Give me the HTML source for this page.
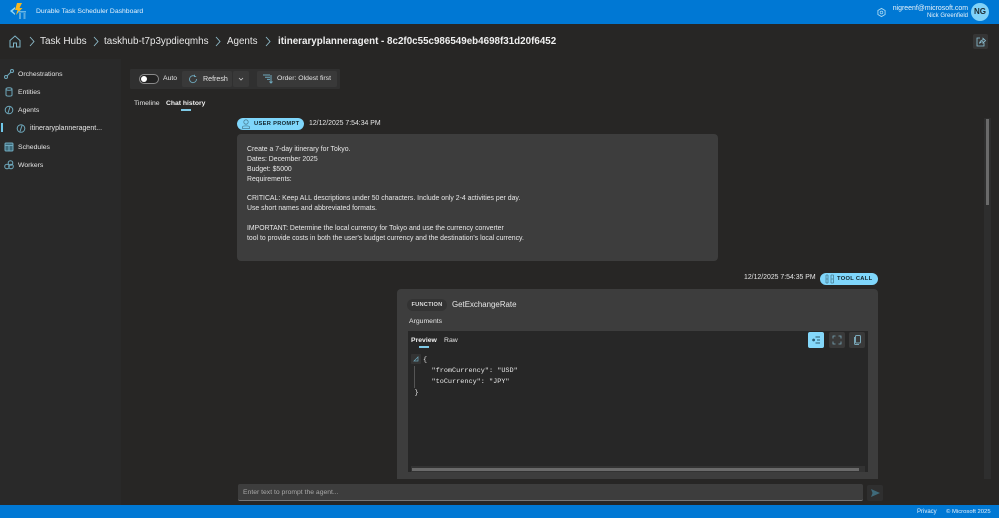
<!DOCTYPE html>
<html><head><meta charset="utf-8">
<style>
*{box-sizing:border-box}
html,body{margin:0;padding:0;width:999px;height:518px;overflow:hidden;background:#272625;font-family:"Liberation Sans",sans-serif;color:#e6e6e6}
.a{position:absolute;white-space:nowrap}
.t{font-size:6.85px;line-height:10px}
svg{position:absolute;overflow:visible;fill:none}
.ic{stroke:#6fa9bd;stroke-width:1}
.pill{position:absolute;white-space:nowrap;background:#7fd6fb;border-radius:7px;height:12px;color:#12242c;font-weight:bold;font-size:5.75px;line-height:12px;letter-spacing:.3px}
.btn{position:absolute;background:#393939;border-radius:2px}
.msg{font-size:6.88px;line-height:9.85px;color:#e8e8e8}
.mono{font-family:'Liberation Mono',monospace;font-size:6.85px;line-height:11px;color:#e8e8e8}
</style></head><body>
<div class="a" style="left:0;top:0;width:999px;height:24px;background:#0078d4"></div>
<svg style="left:9px;top:2px" width="20" height="18" viewBox="0 0 20 18">
<path d="M1 9L6 5V7L3.5 9L6 11.5V13Z" fill="#8fd6f5"/>
<path d="M8 1H13L10.5 6H13.5L7 13L8.5 8H6Z" fill="#f6b81f"/>
<rect x="9" y="9" width="8" height="1.5" fill="#69b7e6"/>
<rect x="10" y="11" width="2" height="6" fill="#5aa9dc"/><rect x="14.5" y="11" width="2" height="6" fill="#5aa9dc"/>
</svg>
<div class="a" style="left:36px;top:6px;font-size:6.8px;line-height:11px;color:#e5f1fb">Durable Task Scheduler Dashboard</div>
<svg style="left:877px;top:7.5px" width="9" height="9" viewBox="0 0 10 10"><path d="M5 .5L9 2.8V7.2L5 9.5L1 7.2V2.8Z" stroke="#a8d8f2" stroke-width="1"/><circle cx="5" cy="5" r="1.5" stroke="#a8d8f2" stroke-width=".8"/></svg>
<div class="a" style="right:31px;top:3.5px;font-size:6.95px;line-height:10px;color:#eaf4fb">nigreenf@microsoft.com</div>
<div class="a" style="right:31px;top:12px;font-size:6px;line-height:8px;color:#eaf4fb">Nick Greenfield</div>
<div class="a" style="left:971px;top:3px;width:18px;height:18px;border-radius:50%;background:#80d2f8;color:#1b2a31;font-weight:bold;font-size:8px;line-height:18px;text-align:center">NG</div>

<svg style="left:9px;top:35px" width="12" height="13" viewBox="0 0 12 13"><path d="M1 5.5L6 1L11 5.5V12H7.5V8H4.5V12H1Z" stroke="#7fb5c8" stroke-width="1"/></svg>
<svg style="left:29px;top:36px" width="6" height="11" viewBox="0 0 6 11"><path d="M1 1L5 5.5L1 10" stroke="#8fbccb" stroke-width=".9"/></svg>
<div class="a" style="left:40px;top:35px;font-size:10px;line-height:13px;color:#e8e8e8">Task Hubs</div>
<svg style="left:93px;top:36px" width="6" height="11" viewBox="0 0 6 11"><path d="M1 1L5 5.5L1 10" stroke="#8fbccb" stroke-width=".9"/></svg>
<div class="a" style="left:104px;top:35px;font-size:9.85px;line-height:13px;color:#e8e8e8">taskhub-t7p3ypdieqmhs</div>
<svg style="left:215px;top:36px" width="6" height="11" viewBox="0 0 6 11"><path d="M1 1L5 5.5L1 10" stroke="#8fbccb" stroke-width=".9"/></svg>
<div class="a" style="left:227px;top:35px;font-size:9.8px;line-height:13px;color:#e8e8e8">Agents</div>
<svg style="left:265px;top:36px" width="6" height="11" viewBox="0 0 6 11"><path d="M1 1L5 5.5L1 10" stroke="#8fbccb" stroke-width=".9"/></svg>
<div class="a" style="left:278px;top:35px;font-size:9.82px;line-height:13px;font-weight:bold;color:#f0f0f0">itineraryplanneragent - 8c2f0c55c986549eb4698f31d20f6452</div>
<div class="a" style="left:973px;top:34px;width:15px;height:15px;background:#353535;border-radius:2px"></div>
<svg style="left:976px;top:37px" width="10" height="10" viewBox="0 0 10 10"><path d="M4 1H1V9H8V6M3.5 6.5C4 4 5.5 3 7 3V1.3L9.5 3.6L7 6V4.6C5.5 4.6 4.5 5.2 3.5 6.5Z" stroke="#8fc4d8" stroke-width=".8"/></svg>

<div class="a" style="left:0;top:59px;width:121px;height:446px;background:#292929"></div>
<svg style="left:4px;top:69px" width="10" height="10" viewBox="0 0 10 10"><circle cx="2" cy="8" r="1.5" class="ic"/><circle cx="8" cy="2" r="1.5" class="ic"/><path d="M3 7L7 3" class="ic"/></svg>
<div class="a t" style="left:18px;top:70px">Orchestrations</div>
<svg style="left:4px;top:87px" width="10" height="10" viewBox="0 0 10 10"><ellipse cx="5" cy="2" rx="3" ry="1.3" class="ic"/><path d="M2 2V8C2 9.5 8 9.5 8 8V2" class="ic"/></svg>
<div class="a t" style="left:18px;top:88px">Entities</div>
<svg style="left:4px;top:105px" width="10" height="10" viewBox="0 0 10 10"><circle cx="5" cy="5" r="3.8" class="ic"/><path d="M6 2L4 8" class="ic"/></svg>
<div class="a t" style="left:18px;top:106px">Agents</div>
<div class="a" style="left:1px;top:123px;width:2px;height:9px;background:#70c8ea"></div>
<svg style="left:16px;top:124px" width="10" height="10" viewBox="0 0 10 10"><circle cx="5" cy="4.5" r="3.8" class="ic"/><path d="M6 1.5L4 7.5" class="ic"/></svg>
<div class="a" style="left:30px;top:124px;font-size:7.05px;line-height:10px;color:#e6e6e6">itineraryplanneragent...</div>
<svg style="left:4px;top:142px" width="10" height="10" viewBox="0 0 10 10"><rect x="1" y="1" width="8" height="8" rx="1" fill="#3e6a7a" class="ic"/><path d="M1 3.5H9M5 3.5V9" class="ic"/></svg>
<div class="a t" style="left:18px;top:143px">Schedules</div>
<svg style="left:4px;top:160px" width="10" height="10" viewBox="0 0 10 10"><circle cx="3" cy="6.5" r="2.3" class="ic"/><circle cx="6.5" cy="3" r="2.3" class="ic"/><circle cx="7" cy="6.5" r="2.3" class="ic"/></svg>
<div class="a t" style="left:18px;top:161px">Workers</div>

<div class="a" style="left:130px;top:69px;width:210px;height:20px;background:#303030;border-radius:1px"></div>
<div class="a" style="left:139px;top:74px;width:20px;height:10px;border:1px solid #8a8a8a;border-radius:5px;background:#222"></div>
<div class="a" style="left:141px;top:76px;width:6px;height:6px;border-radius:50%;background:#fff"></div>
<div class="a t" style="left:163px;top:74px">Auto</div>
<div class="btn" style="left:182px;top:71px;width:50px;height:16px"></div>
<div class="btn" style="left:233px;top:71px;width:16px;height:16px"></div>
<svg style="left:188px;top:74px" width="10" height="10" viewBox="0 0 10 10"><path d="M8.5 5A3.5 3.5 0 1 1 6.5 2M6.5 .8V2.6H8.2" stroke="#6fa9bd" stroke-width=".9"/></svg>
<div class="a t" style="left:203px;top:74px;font-size:7.1px">Refresh</div>
<svg style="left:238px;top:77px" width="6" height="4" viewBox="0 0 6 4"><path d="M1 1L3 3L5 1" stroke="#ccc" stroke-width=".8"/></svg>
<div class="btn" style="left:257px;top:71px;width:80px;height:16px"></div>
<svg style="left:263px;top:74px" width="10" height="10" viewBox="0 0 10 10"><path d="M0 1H7M2 3.2H7M4 5.4H7" stroke="#6fa9bd" stroke-width="1"/><path d="M8 1V9M6.5 7.5L8 9L9.5 7.5" stroke="#6fa9bd" stroke-width="1"/></svg>
<div class="a t" style="left:277px;top:74px">Order: Oldest first</div>

<div class="a t" style="left:134px;top:99px">Timeline</div>
<div class="a t" style="left:166px;top:99px;font-weight:bold;color:#f0f0f0;font-size:6.75px">Chat history</div>
<div class="a" style="left:181px;top:109px;width:10px;height:2px;background:#7fc9e6"></div>

<div class="pill" style="left:237px;top:118px;width:67px;padding-left:17px">USER PROMPT</div>
<svg style="left:241px;top:119px" width="10" height="10" viewBox="0 0 10 10"><circle cx="5" cy="3" r="2.2" stroke="#4b7f94" stroke-width=".8"/><path d="M1.5 9.5V8C1.5 6.5 8.5 6.5 8.5 8V9.5Z" stroke="#4b7f94" stroke-width=".8"/></svg>
<div class="a t" style="left:309px;top:119px;font-size:6.9px">12/12/2025 7:54:34 PM</div>
<div class="a" style="left:237px;top:134px;width:481px;height:127px;background:#3d3d3d;border-radius:4px"></div>
<div class="a msg" style="left:247px;top:145px">Create a 7-day itinerary for Tokyo.<br>Dates: December 2025<br>Budget: $5000<br>Requirements:<br><br>CRITICAL: Keep ALL descriptions under 50 characters. Include only 2-4 activities per day.<br>Use short names and abbreviated formats.<br><br>IMPORTANT: Determine the local currency for Tokyo and use the currency converter<br>tool to provide costs in both the user's budget currency and the destination's local currency.</div>

<div class="a t" style="left:744px;top:273px;font-size:6.9px">12/12/2025 7:54:35 PM</div>
<div class="pill" style="left:820px;top:272.5px;width:58px;padding-left:17px">TOOL CALL</div>
<svg style="left:825px;top:273.5px" width="10" height="10" viewBox="0 0 10 10"><path d="M1 1V9M3 1V9M1 1H3M1 5H3M1 9H3M6 1V9M8.5 1V9M6 1H8.5M6 5H8.5M6 9H8.5" stroke="#4b7f94" stroke-width=".8"/></svg>
<div class="a" style="left:397px;top:289px;width:481px;height:216px;background:#3d3d3d;border-radius:4px 4px 0 0"></div>
<div class="a" style="left:407px;top:299px;width:40px;height:12px;background:#333;border-radius:6px;font-size:5.7px;line-height:12px;font-weight:bold;text-align:center;color:#ddd;letter-spacing:.2px">FUNCTION</div>
<div class="a" style="left:452px;top:299px;font-size:7.9px;line-height:12px;color:#e6e6e6">GetExchangeRate</div>
<div class="a t" style="left:409px;top:317px">Arguments</div>
<div class="a" style="left:408px;top:331px;width:460px;height:141px;background:#272727"></div>
<div class="a t" style="left:411px;top:336px;font-weight:bold;color:#f0f0f0">Preview</div>
<div class="a t" style="left:444px;top:336px">Raw</div>
<div class="a" style="left:419px;top:346px;width:10px;height:1.5px;background:#7fc9e6"></div>
<div class="a" style="left:808px;top:332px;width:16px;height:16px;background:#84d8fb;border-radius:2px"></div>
<svg style="left:811px;top:335px" width="10" height="10" viewBox="0 0 10 10"><path d="M4.5 2H9M6 5H9M4.5 8H9" stroke="#2b5a6e" stroke-width="1"/><circle cx="2.6" cy="5" r="1.4" fill="#2b5a6e"/></svg>
<div class="btn" style="left:829px;top:332px;width:16px;height:16px"></div>
<svg style="left:833px;top:336px" width="8" height="8" viewBox="0 0 8 8"><path d="M0 2.5V0H2.5M5.5 0H8V2.5M8 5.5V8H5.5M2.5 8H0V5.5" stroke="#79a7b8" stroke-width=".8"/></svg>
<div class="btn" style="left:849px;top:332px;width:16px;height:16px"></div>
<svg style="left:853px;top:335px" width="9" height="10" viewBox="0 0 9 10"><rect x="2.5" y=".5" width="5" height="7.5" rx="1" stroke="#79a7b8"/><path d="M1.5 2V8.5C1.5 9 2 9.5 2.5 9.5H6" stroke="#79a7b8"/></svg>
<div class="a" style="left:411px;top:354px;width:10px;height:10px;background:#333;border-radius:1px"></div>
<svg style="left:413px;top:356px" width="6" height="6" viewBox="0 0 6 6"><path d="M1 5H5V1Z" stroke="#6fa9bd" stroke-width=".7"/></svg>
<div class="a" style="left:414px;top:366px;width:1px;height:22px;background:#555"></div>
<div class="a mono" style="left:423px;top:355px">{</div>
<div class="a mono" style="left:431.5px;top:366px">"fromCurrency": "USD"</div>
<div class="a mono" style="left:431.5px;top:377px">"toCurrency": "JPY"</div>
<div class="a mono" style="left:414.5px;top:388px">}</div>
<div class="a" style="left:411px;top:466px;width:454px;height:6px;background:#333"></div>
<div class="a" style="left:412px;top:468px;width:447px;height:3px;background:#6a6a6a"></div>

<div class="a" style="left:121px;top:479px;width:878px;height:26px;background:#272625"></div>
<div class="a" style="left:238px;top:484px;width:625px;height:17px;background:#3d3d3d;border-bottom:1px solid #777;border-radius:2px"></div>
<div class="a" style="left:243px;top:488px;font-size:6.8px;line-height:10px;color:#a8a8a8">Enter text to prompt the agent...</div>
<div class="a" style="left:867px;top:485px;width:16px;height:16px;background:#2f2f2f;border-radius:2px"></div>
<svg style="left:870px;top:488px" width="11" height="10" viewBox="0 0 11 10"><path d="M1 1L10 5L1 9L2.5 5Z" fill="#3f6a7a"/></svg>

<div class="a" style="left:984px;top:118px;width:7px;height:361px;background:#2e2e2e"></div>
<div class="a" style="left:986px;top:119px;width:3px;height:86px;background:#6a6a6a"></div>

<div class="a" style="left:0;top:505px;width:999px;height:13px;background:#0078d4"></div>
<div class="a" style="left:917px;top:508px;font-size:6px;line-height:9px;color:#e5f1fb">Privacy</div>
<div class="a" style="left:946px;top:508px;font-size:5.9px;line-height:9px;color:#e5f1fb">© Microsoft 2025</div>
</body></html>
